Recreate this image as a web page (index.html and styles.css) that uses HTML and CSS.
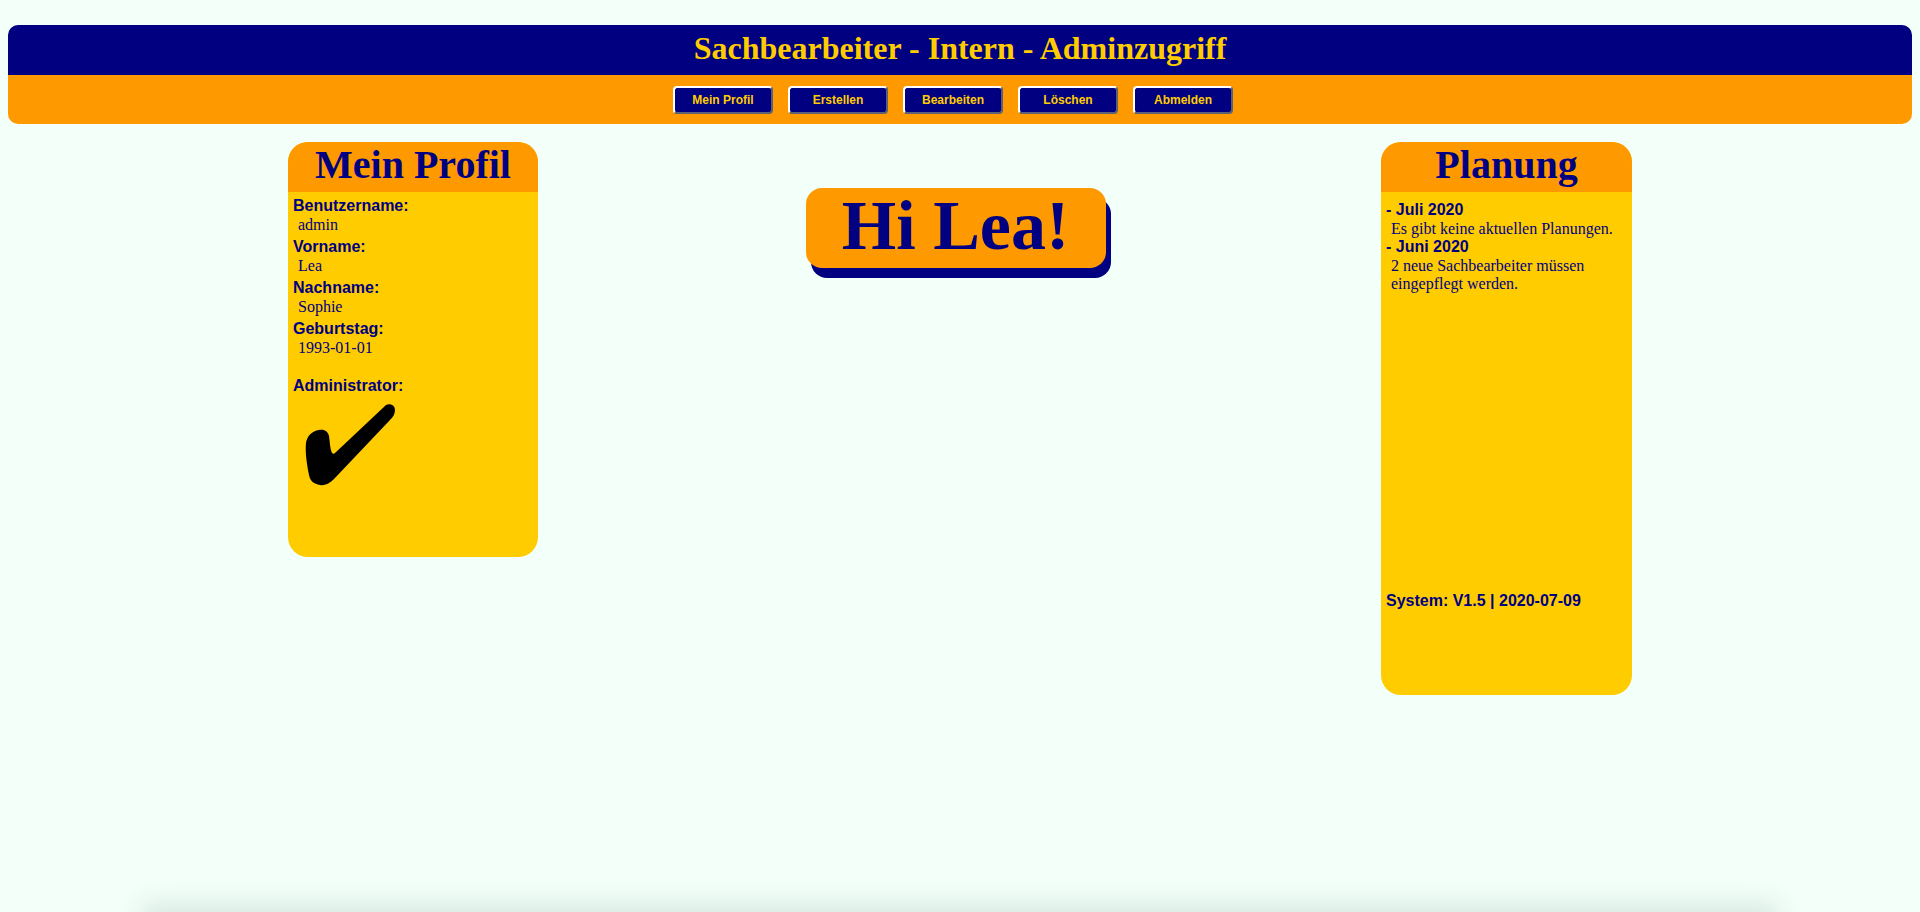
FILE: index.html
```html
<!DOCTYPE html>
<html lang="de">
<head>
<meta charset="utf-8">
<title>Sachbearbeiter - Intern - Adminzugriff</title>
<link rel="stylesheet" href="styles.css">
</head>
<body>
<header class="top">
  <div class="top-title"><h1>Sachbearbeiter - Intern - Adminzugriff</h1></div>
  <nav class="top-nav">
    <button class="nav-btn">Mein Profil</button>
    <button class="nav-btn">Erstellen</button>
    <button class="nav-btn">Bearbeiten</button>
    <button class="nav-btn">Löschen</button>
    <button class="nav-btn">Abmelden</button>
  </nav>
</header>
<main class="layout">
  <section class="card card-profile">
    <div class="card-head"><h2>Mein Profil</h2></div>
    <div class="card-body">
      <div class="field-label">Benutzername:</div>
      <div class="field-value">admin</div>
      <div class="field-label">Vorname:</div>
      <div class="field-value">Lea</div>
      <div class="field-label">Nachname:</div>
      <div class="field-value">Sophie</div>
      <div class="field-label">Geburtstag:</div>
      <div class="field-value">1993-01-01</div>
      <div class="field-label field-admin">Administrator:</div>
      <svg class="check" width="92" height="84" viewBox="0 0 92 84" aria-hidden="true">
        <path d="M82 2 C86 0 91 2 91 7 C91 11 89 14 86 17 L30 76 C25 81 20 83 16 82 C10 81 6 78 5 72 C3 62 1 50 2 40 C3 33 8 28 15 27 C21 26 24 29 25 33 C26 40 26 46 28 50 C29 51 30 51 31 50 Z" fill="#000"/>
      </svg>
    </div>
  </section>
  <div class="center">
    <div class="greeting">Hi Lea!</div>
  </div>
  <section class="card card-plan">
    <div class="card-head"><h2>Planung</h2></div>
    <div class="card-body plan-body">
      <div class="plan-label">- Juli 2020</div>
      <div class="plan-text">Es gibt keine aktuellen Planungen.</div>
      <div class="plan-label">- Juni 2020</div>
      <div class="plan-text">2 neue Sachbearbeiter müssen<br>eingepflegt werden.</div>
      <div class="plan-label plan-system">System: V1.5 | 2020-07-09</div>
    </div>
  </section>
</main>
<div class="page-shade"></div>
</body>
</html>
```
FILE: styles.css
```css
html, body {
  margin: 0;
  padding: 0;
}
body {
  background: #F3FFF9;
  font-family: "Liberation Serif", "Times New Roman", serif;
  color: #000080;
  min-height: 912px;
  overflow: hidden;
}
.top {
  margin: 25px 8px 0;
  border-radius: 10px;
  overflow: hidden;
}
.top-title {
  background: #000080;
  height: 50px;
}
.top-title h1 {
  margin: 0;
  font: bold 32px/46px "Liberation Serif", serif;
  color: #FFCC00;
  text-align: center;
}
.top-nav {
  background: #FF9900;
  height: 49px;
  box-sizing: border-box;
  padding: 11px 14px 0 0;
  display: flex;
  justify-content: center;
  gap: 15px;
}
.nav-btn {
  width: 100px;
  height: 28px;
  box-sizing: border-box;
  background: #000080;
  color: #FFCC00;
  border: 2px solid;
  border-color: #ffffff #5b6075 #5b6075 #ffffff;
  border-radius: 4px;
  font: bold 12px "Liberation Sans", Arial, sans-serif;
  padding: 0;
}
.layout {
  display: grid;
  grid-template-columns: 250px 843px 251px;
  justify-content: center;
  align-items: start;
  margin-top: 18px;
}
.card {
  background: #FFCC00;
  border-radius: 20px;
  overflow: hidden;
}
.card-profile { height: 415px; }
.card-plan { height: 553px; }
.card-head {
  background: #FF9900;
  height: 50px;
}
.card-head h2 {
  margin: 0;
  font: bold 40px/46px "Liberation Serif", serif;
  color: #000080;
  text-align: center;
}
.card-body {
  padding: 5px 5px 0;
  display: flex;
  flex-direction: column;
  align-items: flex-start;
}
.field-label {
  font: bold 16px/18px "Liberation Sans", Arial, sans-serif;
  color: #000080;
}
.field-value {
  font: 16px/19px "Liberation Serif", serif;
  color: #000080;
  padding-left: 5px;
  margin-bottom: 4px;
}
.field-admin {
  margin-top: 16px;
}
.check {
  display: block;
  margin: 8px 0 0 11px;
}
.center {
  display: flex;
  justify-content: center;
  padding-right: 8px;
}
.greeting {
  margin-top: 46px;
  width: 300px;
  height: 80px;
  background: #FF9900;
  border-radius: 16px;
  box-shadow: 5px 10px 0 #000080;
  font: bold 70px/76px "Liberation Serif", serif;
  color: #000080;
  text-align: center;
}
.plan-body {
  padding-top: 9px;
}
.plan-label {
  font: bold 16px/18.5px "Liberation Sans", Arial, sans-serif;
  color: #000080;
}
.plan-text {
  font: 16px/18.5px "Liberation Serif", serif;
  color: #000080;
  padding-left: 5px;
}
.plan-system {
  margin-top: 298px;
}
.page-shade {
  position: fixed;
  left: 150px;
  right: 150px;
  bottom: -30px;
  height: 30px;
  box-shadow: 0 0 26px 8px rgba(70, 120, 100, 0.16);
}
```
